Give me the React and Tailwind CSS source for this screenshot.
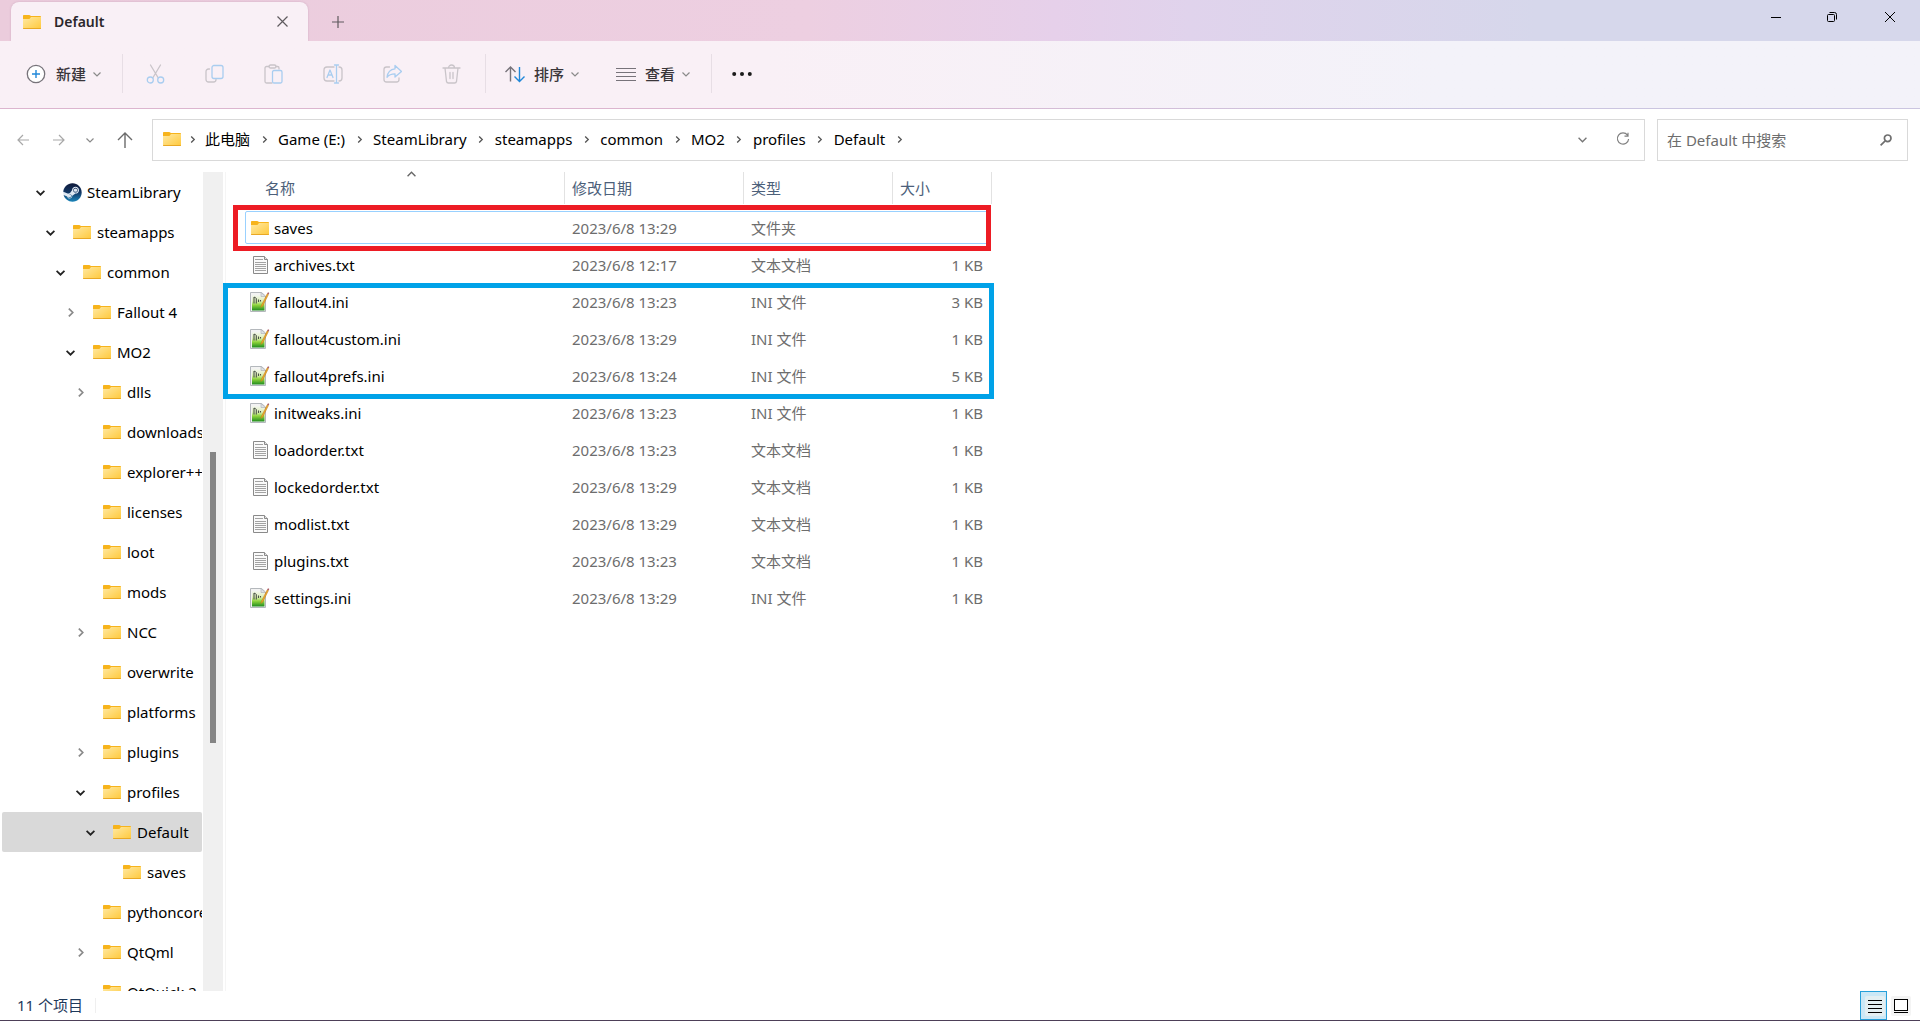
import { useState } from 'react';
import { FaSteam } from 'react-icons/fa';

const tree = [
  { name: 'SteamLibrary', level: 0, state: 'open', icon: 'steam' },
  { name: 'steamapps', level: 1, state: 'open' },
  { name: 'common', level: 2, state: 'open' },
  { name: 'Fallout 4', level: 3, state: 'closed' },
  { name: 'MO2', level: 3, state: 'open' },
  { name: 'dlls', level: 4, state: 'closed' },
  { name: 'downloads', level: 4 },
  { name: 'explorer++', level: 4 },
  { name: 'licenses', level: 4 },
  { name: 'loot', level: 4 },
  { name: 'mods', level: 4 },
  { name: 'NCC', level: 4, state: 'closed' },
  { name: 'overwrite', level: 4 },
  { name: 'platforms', level: 4 },
  { name: 'plugins', level: 4, state: 'closed' },
  { name: 'profiles', level: 4, state: 'open' },
  { name: 'Default', level: 5, state: 'open' },
  { name: 'saves', level: 6 },
  { name: 'pythoncore', level: 4 },
  { name: 'QtQml', level: 4, state: 'closed' },
  { name: 'QtQuick.2', level: 4 },
];

// left padding of a tree row for each depth
const indent = ['pl-[33px]', 'pl-[43px]', 'pl-[53px]', 'pl-[63px]', 'pl-[73px]', 'pl-[83px]', 'pl-[93px]'];

const files = [
  { name: 'saves', date: '2023/6/8 13:29', type: '文件夹', size: '', icon: 'folder' },
  { name: 'archives.txt', date: '2023/6/8 12:17', type: '文本文档', size: '1 KB', icon: 'txt' },
  { name: 'fallout4.ini', date: '2023/6/8 13:23', type: 'INI 文件', size: '3 KB', icon: 'ini' },
  { name: 'fallout4custom.ini', date: '2023/6/8 13:29', type: 'INI 文件', size: '1 KB', icon: 'ini' },
  { name: 'fallout4prefs.ini', date: '2023/6/8 13:24', type: 'INI 文件', size: '5 KB', icon: 'ini' },
  { name: 'initweaks.ini', date: '2023/6/8 13:23', type: 'INI 文件', size: '1 KB', icon: 'ini' },
  { name: 'loadorder.txt', date: '2023/6/8 13:23', type: '文本文档', size: '1 KB', icon: 'txt' },
  { name: 'lockedorder.txt', date: '2023/6/8 13:29', type: '文本文档', size: '1 KB', icon: 'txt' },
  { name: 'modlist.txt', date: '2023/6/8 13:29', type: '文本文档', size: '1 KB', icon: 'txt' },
  { name: 'plugins.txt', date: '2023/6/8 13:23', type: '文本文档', size: '1 KB', icon: 'txt' },
  { name: 'settings.ini', date: '2023/6/8 13:29', type: 'INI 文件', size: '1 KB', icon: 'ini' },
];

const crumbs = ['此电脑', 'Game (E:)', 'SteamLibrary', 'steamapps', 'common', 'MO2', 'profiles', 'Default'];

/* ---------- icons ---------- */

function FolderIcon() {
  return (
    <svg width="18" height="14" viewBox="0 0 18 14" className="shrink-0">
      <defs>
        <linearGradient id="folderFront" x1="0" y1="0" x2="1" y2="1">
          <stop offset="0" stopColor="#ffe9a3" />
          <stop offset="1" stopColor="#ffc93c" />
        </linearGradient>
      </defs>
      <path d="M0 1C0 .4.4 0 1 0h5.2c.5 0 .8.2 1 .5L8 1h9c.6 0 1 .4 1 1v4H0z" fill="#f7b41c" />
      <path d="M0 4h6.4L8 2h10v11c0 .6-.4 1-1 1H1c-.6 0-1-.4-1-1z" fill="url(#folderFront)" />
      <path d="M0 13h18c0 .6-.4 1-1 1H1c-.6 0-1-.4-1-1z" fill="#e9a824" />
    </svg>
  );
}

function TxtIcon() {
  return (
    <svg width="20" height="20" viewBox="0 0 20 20" className="shrink-0">
      <path d="M3.5 1.500h11l3 3v14h-14z" fill="#fafafa" stroke="#8a8a8a" />
      <path d="M14.500 1.500v3h3" fill="#e4e4e4" stroke="#8a8a8a" />
      <path d="M5 4.500h8M5 7.500h11M5 9.500h11M5 11.500h11M5 13.500h11M5 15.500h11" stroke="#a3a3a3" />
    </svg>
  );
}

function IniIcon() {
  return (
    <svg width="20" height="20" viewBox="0 0 20 20" className="shrink-0">
      <defs>
        <linearGradient id="iniPage" x1="0" y1="0" x2="0" y2="1">
          <stop offset="0" stopColor="#f4f6f1" />
          <stop offset=".4" stopColor="#dcefb4" />
          <stop offset=".65" stopColor="#8fd43c" />
          <stop offset="1" stopColor="#1f8c1f" />
        </linearGradient>
      </defs>
      <path d="M.5.5h11l4 3.500v15.500H.5z" fill="#f3f3f3" stroke="#b4b8bc" />
      <path d="M2 3h12.500v15.500H2z" fill="url(#iniPage)" />
      <path d="M11 .5l4.500 4H11z" fill="#dfe3e6" stroke="#a9adb2" strokeWidth=".6" />
      <path d="M4 5v6.500M6.300 6.500v5M8.500 7.500v2.500M10.500 8v1.500" stroke="#4a5346" strokeWidth="1.100" />
      <path d="M4 5.300h1.200l1.100 1.400" fill="none" stroke="#4a5346" />
      <path d="M17.200 1.800l-5.700 11.400-.8 2.200 2-1.300L18.400 2.600z" fill="#f0a929" stroke="#b9781a" strokeWidth=".5" />
      <path d="M17.200 1.800L18 .3l1.300.8-.9 1.500z" fill="#a5505a" />
    </svg>
  );
}

function SteamIcon() {
  return (
    <span className="flex h-[18px] w-[18px] shrink-0 items-center justify-center rounded-full bg-[#dfe8f2]">
      <svg width="0" height="0" className="absolute">
        <defs>
          <linearGradient id="steamDisc" x1="0" y1="0" x2="0" y2="1">
            <stop offset="0" stopColor="#101a3a" />
            <stop offset=".5" stopColor="#123765" />
            <stop offset="1" stopColor="#1b86bb" />
          </linearGradient>
        </defs>
      </svg>
      <FaSteam size={19} fill="url(#steamDisc)" className="shrink-0" />
    </span>
  );
}

function FileIcon({ kind }) {
  if (kind === 'folder') return <FolderIcon />;
  if (kind === 'txt') return <TxtIcon />;
  return <IniIcon />;
}

function Chevron({ dir = 'down', size = 8, color = '#8a8a8a', width = 1.2 }) {
  const paths = {
    down: 'M.5 2.5L4 6l3.500-3.500',
    right: 'M2.500 .5L6 4l-3.500 3.500',
    up: 'M.5 5.500L4 2l3.500 3.500',
  };
  return (
    <svg width={size} height={size} viewBox="0 0 8 8" fill="none" stroke={color} strokeWidth={width} className="shrink-0">
      <path d={paths[dir]} />
    </svg>
  );
}

function ToolIcon({ label, children }) {
  return (
    <button aria-label={label} className="flex h-10 w-[59px] shrink-0 items-center justify-center">
      <svg width="20" height="20" viewBox="0 0 20 20" fill="none" stroke="#c9c4c9" strokeWidth="1.300" strokeLinejoin="round" strokeLinecap="round">
        {children}
      </svg>
    </button>
  );
}

function Divider({ className }) {
  return <div className={`h-[39px] w-px shrink-0 bg-[#e7dee5] ${className}`} />;
}

/* ---------- window parts ---------- */

function TitleBar() {
  return (
    <header className="flex h-[41px] items-end bg-[linear-gradient(to_right,#ebccdc_0%,#edcfe1_42%,#e6d0ea_55%,#e0d3ec_62%,#d6d7eb_80%)]">
      <div className="ml-[11px] flex h-[39px] w-[297px] items-center rounded-t-lg bg-[#f9f0f6] pr-[18px] pl-3 shadow-[0_0_2px_rgba(120,60,100,0.25)]">
        <FolderIcon />
        <h1 className="ml-[13px] flex-1 text-[14px] leading-5 font-semibold text-[#2b272b]">Default</h1>
        <button aria-label="关闭标签页" className="flex h-4 w-4 items-center justify-center">
          <svg width="11" height="11" viewBox="0 0 11 11" stroke="#5f5a5e" strokeWidth="1.200">
            <path d="M.5.5l10 10M10.500.5l-10 10" />
          </svg>
        </button>
      </div>
      <button aria-label="新建标签页" className="ml-[22px] flex h-[39px] w-4 items-center justify-center">
        <svg width="12" height="12" viewBox="0 0 12 12" stroke="#5f5a5e" strokeWidth="1.200">
          <path d="M6 0v12M0 6h12" />
        </svg>
      </button>
      <div className="ml-auto flex h-full">
        <button aria-label="最小化" className="flex h-[34px] w-14 items-center justify-center">
          <svg width="10" height="10" viewBox="0 0 10 10" stroke="#000"><path d="M0 5.500h10" /></svg>
        </button>
        <button aria-label="还原" className="flex h-[34px] w-14 items-center justify-center">
          <svg width="10" height="10" viewBox="0 0 10 10" fill="none" stroke="#000">
            <rect x=".5" y="2.500" width="7" height="7" rx="1" />
            <path d="M2.500.5h5a2 2 0 0 1 2 2v5" />
          </svg>
        </button>
        <button aria-label="关闭" className="flex h-[34px] w-[60px] items-center justify-center">
          <svg width="10" height="10" viewBox="0 0 10 10" stroke="#000"><path d="M0 0l10 10M10 0L0 10" /></svg>
        </button>
      </div>
    </header>
  );
}

function Toolbar() {
  return (
    <div className="bg-linear-to-r from-[#dcb5cf] from-40% to-[#cbc5e0] to-75% pb-px">
      <div className="flex h-[67px] items-center bg-linear-to-r from-[#f9f0f6] from-40% to-[#f3f2f9] to-75% pb-[2px] text-[15px] leading-5 font-medium text-[#3a363a]">
        <button className="ml-[26px] flex items-center">
          <svg width="20" height="20" viewBox="0 0 20 20" fill="none">
            <circle cx="10" cy="10" r="8.700" fill="#fff" stroke="#77737a" strokeWidth="1.300" />
            <path d="M10 6v8M6 10h8" stroke="#2188d9" strokeWidth="1.400" />
          </svg>
          <span className="mr-[7px] ml-[10px]">新建</span>
          <Chevron />
        </button>
        <Divider className="ml-[21px] mr-[3px]" />
        <ToolIcon label="剪切">
          <path d="M4.500 1l7.500 12.500M14.500 1L7 13.500" />
          <g stroke="#a9cdf0"><circle cx="4.300" cy="16" r="3" /><circle cx="14.700" cy="16" r="3" /></g>
        </ToolIcon>
        <ToolIcon label="复制">
          <path d="M4.500 5h-1A2.500 2.500 0 0 0 1 7.500v8A2.500 2.500 0 0 0 3.500 18h5a2.500 2.500 0 0 0 2.500-2.500" />
          <rect x="7" y="1.500" width="11" height="13" rx="2" stroke="#a9cdf0" />
        </ToolIcon>
        <ToolIcon label="粘贴">
          <path d="M5 2.500H2.500A1.500 1.500 0 0 0 1 4v13.500A1.500 1.500 0 0 0 2.500 19H8M12 2.500h1.500A1.500 1.500 0 0 1 15 4v1" />
          <rect x="5" y="1" width="7" height="3" rx="1.500" />
          <rect x="8.500" y="6.500" width="9.500" height="12.500" rx="1.500" stroke="#a9cdf0" />
        </ToolIcon>
        <ToolIcon label="重命名">
          <path d="M11 3H4a3 3 0 0 0-3 3v8a3 3 0 0 0 3 3h7M16 3a3 3 0 0 1 3 3v8a3 3 0 0 1-3 3" />
          <g stroke="#a9cdf0"><path d="M4 13.500L7 6l3 7.500M5 11h4M13.500 1v18M11.500 1h4M11.500 19h4" /></g>
        </ToolIcon>
        <ToolIcon label="共享">
          <path d="M7.500 3h-3A2.500 2.500 0 0 0 2 5.500v10A2.500 2.500 0 0 0 4.500 18h10a2.500 2.500 0 0 0 2.500-2.500V14" />
          <path d="M13 1.500l6.500 6-6.500 5.500V9.800c-3.500 0-6 .8-8 3.500.5-4.500 3-8 8-8.500z" stroke="#a9cdf0" />
        </ToolIcon>
        <ToolIcon label="删除">
          <path d="M2 4h17M4 4l1.500 13.500a2 2 0 0 0 2 1.500h6a2 2 0 0 0 2-1.500L17 4M7.500 4a3 3 0 0 1 6 0M9 8.500v6M12 8.500v6" />
        </ToolIcon>
        <Divider className="ml-[5px]" />
        <button className="ml-[19px] flex items-center">
          <svg width="20" height="20" viewBox="0 0 20 20" fill="none" strokeWidth="1.400">
            <path d="M5.500 17.500V3M.5 8l5-5 5 5" stroke="#77737a" />
            <path d="M14.500 3v14.500M9.500 12.500l5 5 5-5" stroke="#2188d9" />
          </svg>
          <span className="mr-[7px] ml-[9px]">排序</span>
          <Chevron />
        </button>
        <button className="ml-[37px] flex items-center">
          <svg width="20" height="20" viewBox="0 0 20 20" stroke="#77737a" strokeWidth="1.200">
            <path d="M0 4.500h20M0 8.500h20M0 12.500h20M0 16.500h20" />
          </svg>
          <span className="mr-[7px] ml-[9px]">查看</span>
          <Chevron />
        </button>
        <Divider className="ml-[21px]" />
        <button aria-label="查看更多" className="ml-5">
          <svg width="20" height="6" viewBox="0 0 20 6" fill="#1b1b1b">
            <circle cx="2.200" cy="3" r="2" />
            <circle cx="10" cy="3" r="2" />
            <circle cx="17.800" cy="3" r="2" />
          </svg>
        </button>
      </div>
    </div>
  );
}

function AddressRow() {
  const [query, setQuery] = useState('');

  return (
    <div className="flex items-center pt-[10px] pr-3 pb-[11px] pl-[5px]">
      <button aria-label="后退" className="flex h-8 w-9 items-center justify-center">
        <svg width="12" height="12" viewBox="0 0 12 12" fill="none" stroke="#a8a8a8" strokeWidth="1.200">
          <path d="M12 6H1M6 1L1 6l5 5" />
        </svg>
      </button>
      <button aria-label="前进" className="flex h-8 w-9 items-center justify-center">
        <svg width="12" height="12" viewBox="0 0 12 12" fill="none" stroke="#a8a8a8" strokeWidth="1.200">
          <path d="M0 6h11M6 1l5 5-5 5" />
        </svg>
      </button>
      <button aria-label="最近浏览的位置" className="flex h-8 w-[26px] items-center justify-center">
        <Chevron />
      </button>
      <button aria-label="上移" className="flex h-8 w-11 items-center justify-center">
        <svg width="16" height="16" viewBox="0 0 16 16" fill="none" stroke="#6b6b6b" strokeWidth="1.400">
          <path d="M8 16V1M1 8l7-7 7 7" />
        </svg>
      </button>

      <nav className="ml-[5px] flex h-[42px] flex-1 items-center border border-[#d9d9d9] bg-white pb-[2px] pl-[10px] text-[15px] leading-5 text-black">
        <FolderIcon />
        <span className="mr-[9px] ml-[7px] flex w-2 justify-center"><Chevron dir="right" size={7} color="#555" width={1.5} /></span>
        {crumbs.map((crumb) => (
          <span key={crumb} className="mr-[10px] flex items-center">
            <a href="#" className="whitespace-nowrap">{crumb}</a>
            <span className="ml-[10px] flex w-2 justify-center"><Chevron dir="right" size={7} color="#555" width={1.5} /></span>
          </span>
        ))}
        <button aria-label="以前的位置" className="ml-auto flex h-8 w-8 items-center justify-center">
          <Chevron size={9} color="#767676" />
        </button>
        <button aria-label="刷新" className="mr-[5px] ml-[9px] flex h-8 w-8 items-center justify-center">
          <svg width="14" height="14" viewBox="0 0 14 14" fill="none" stroke="#808080" strokeWidth="1.200">
            <path d="M11.500 3.200A5.600 5.600 0 1 0 12.600 7M12 .8v3.400H8.500" />
          </svg>
        </button>
      </nav>

      <div className="ml-3 flex h-[42px] w-[251px] items-center border border-[#d9d9d9] bg-white pr-[15px] pl-[9px]">
        <input
          type="text"
          aria-label="搜索"
          placeholder="在 Default 中搜索"
          value={query}
          onChange={(e) => setQuery(e.target.value)}
          className="min-w-0 flex-1 text-[15px] leading-5 outline-none placeholder:text-[#6d6d6d]"
        />
        <svg width="12" height="12" viewBox="0 0 12 12" fill="none" stroke="#6f6f6f" strokeWidth="1.700">
          <circle cx="7.700" cy="4.300" r="3.300" />
          <path d="M5.200 6.800L.6 11.400" />
        </svg>
      </div>
    </div>
  );
}

function TreeRow({ item, selected, onSelect }) {
  return (
    <li className="pr-px pl-[2px]">
      <button
        onClick={onSelect}
        className={`flex h-10 w-full items-center overflow-hidden rounded-[2px] text-left ${indent[item.level]} ${selected ? 'bg-[#d9d9d9]' : ''}`}
      >
        <span className="flex w-[10px] shrink-0 justify-center">
          {item.state === 'open' && <Chevron size={9} color="#222" width={1.6} />}
          {item.state === 'closed' && <Chevron dir="right" size={9} color="#8a8a8a" width={1.5} />}
        </span>
        <span className="ml-[18px]">{item.icon === 'steam' ? <SteamIcon /> : <FolderIcon />}</span>
        <span className="ml-[6px] whitespace-nowrap">{item.name}</span>
      </button>
    </li>
  );
}

function Sidebar() {
  const [selected, setSelected] = useState('Default');

  return (
    <aside className="flex shrink-0 border-r border-[#f5f5f5] pr-[2px]">
      <ul className="w-[203px] overflow-hidden text-[15px] leading-5 text-black">
        {tree.map((item) => (
          <TreeRow
            key={item.name + item.level}
            item={item}
            selected={item.name === selected}
            onSelect={() => setSelected(item.name)}
          />
        ))}
      </ul>
      <div className="w-5 bg-[#f0f0f0] pt-[280px]">
        <div className="mx-auto h-[291px] w-[6px] bg-[#858585]" />
      </div>
    </aside>
  );
}

function HeaderCell({ children, className }) {
  return <div className={`flex h-8 items-center border-r border-[#e2e2e2] ${className}`}>{children}</div>;
}

function FileList() {
  return (
    <main className="min-w-0 flex-1 pl-[19px]">
      <div className="relative w-[747px]">
        <table className="w-full table-fixed text-[15px] leading-5">
          <colgroup>
            <col className="w-[320px]" />
            <col className="w-[179px]" />
            <col className="w-[149px]" />
            <col className="w-[99px]" />
          </colgroup>
          <thead>
            <tr className="h-[37px] text-left align-top text-[#4c607a]">
              <th className="relative p-0 font-normal">
                <HeaderCell className="pl-5">名称</HeaderCell>
                <span className="absolute -top-[2px] left-[162px]"><Chevron dir="up" size={9} color="#666" /></span>
              </th>
              <th className="p-0 font-normal"><HeaderCell className="pl-[7px]">修改日期</HeaderCell></th>
              <th className="p-0 font-normal"><HeaderCell className="pl-[7px]">类型</HeaderCell></th>
              <th className="p-0 font-normal"><HeaderCell className="pl-[7px]">大小</HeaderCell></th>
            </tr>
          </thead>
          <tbody className="text-[#6d6d6d]">
            {files.map((file) => (
              <tr key={file.name} className="h-[37px]">
                <td className="p-0 text-black">
                  <div className="flex items-center pl-[5px]">
                    <span className="flex w-5 shrink-0 justify-center"><FileIcon kind={file.icon} /></span>
                    <span className="ml-1">{file.name}</span>
                  </div>
                </td>
                <td className="p-0 pl-[7px]">{file.date}</td>
                <td className="p-0 pl-[7px]">{file.type}</td>
                <td className="p-0 pr-[9px] text-right">{file.size}</td>
              </tr>
            ))}
          </tbody>
        </table>

        {/* focus frame of the first row and the two marker boxes */}
        <div className="pointer-events-none absolute top-[39px] left-0 h-[33px] w-[744px] rounded-[2px] border border-[#99d1ff]" />
        <div className="pointer-events-none absolute top-[33px] -left-3 h-[46px] w-[758px] border-5 border-[#ed1c24]" />
        <div className="pointer-events-none absolute top-[111px] -left-[22px] h-[116px] w-[771px] border-5 border-[#00a2e8]" />
      </div>
    </main>
  );
}

function StatusBar() {
  return (
    <footer className="flex h-[30px] items-stretch border-b border-[#4d3f58] bg-white pl-[17px] text-[15px] leading-5 text-[#1e395b]">
      <span className="self-center pb-[2px]">11 个项目</span>
      <div className="my-[7px] ml-3 w-px bg-[#efefef]" />
      <div className="ml-auto flex pr-[9px]">
        <button aria-label="详细信息" className="flex w-[27px] items-center justify-end border border-[#26a0da] bg-[#cbe8f6] pr-px">
          <svg width="20" height="20" viewBox="0 0 20 20" stroke="#000">
            <rect width="20" height="20" rx="2" fill="#e3eff2" stroke="none" />
            <path d="M3 4.500h14M3 8.500h14M3 12.500h14M3 16.500h14" />
          </svg>
        </button>
        <button aria-label="大图标" className="flex w-6 items-center justify-end">
          <svg width="20" height="20" viewBox="0 0 20 20" fill="none" stroke="#000">
            <rect width="20" height="20" rx="2" fill="#f4f4f4" stroke="none" />
            <rect x="3.500" y="3.500" width="13" height="11" fill="#fff" />
            <path d="M3 16.500h14" />
          </svg>
        </button>
      </div>
    </footer>
  );
}

export default function App() {
  return (
    <div className="flex h-screen flex-col overflow-hidden bg-white font-['Noto_Sans','Noto_Sans_CJK_SC',sans-serif]">
      <TitleBar />
      <Toolbar />
      <AddressRow />
      <div className="flex min-h-0 flex-1">
        <Sidebar />
        <FileList />
      </div>
      <StatusBar />
    </div>
  );
}
